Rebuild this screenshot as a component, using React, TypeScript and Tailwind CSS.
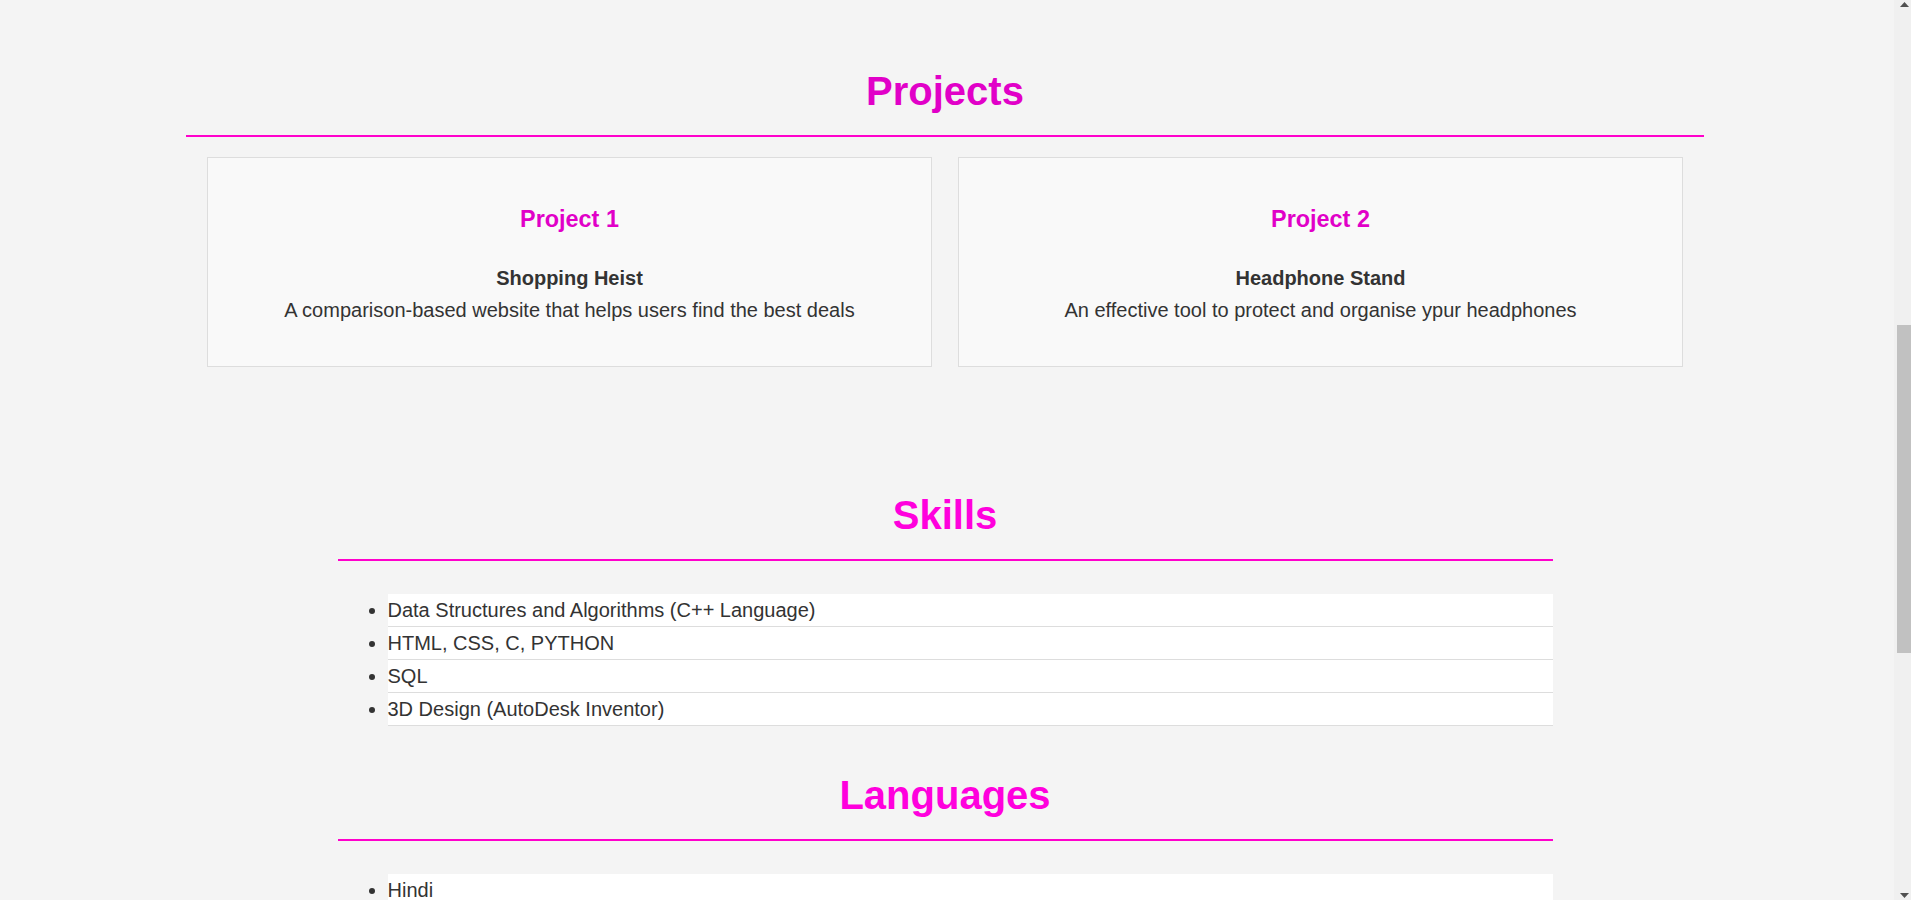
type Project = { label: string; title: string; desc: string };

const projects: Project[] = [
  {
    label: "Project 1",
    title: "Shopping Heist",
    desc: "A comparison-based website that helps users find the best deals",
  },
  {
    label: "Project 2",
    title: "Headphone Stand",
    desc: "An effective tool to protect and organise ypur headphones",
  },
];

const skills = [
  "Data Structures and Algorithms (C++ Language)",
  "HTML, CSS, C, PYTHON",
  "SQL",
  "3D Design (AutoDesk Inventor)",
];

const languages = ["Hindi", "English"];

function ListSection({ title, items, className }: { title: string; items: string[]; className: string }) {
  return (
    <section className={`w-[1215px] mx-auto ${className}`}>
      <h2 className="text-center text-[40px] leading-[64px] font-bold text-[#ff00dd] pb-3 border-b-2 border-[#ff00cc]">
        {title}
      </h2>
      <ul className="list-disc pl-[50px] mt-[33px]">
        {items.map((s) => (
          <li key={s} className="bg-white border-b border-[#dddddd] leading-[32px]">
            {s}
          </li>
        ))}
      </ul>
    </section>
  );
}

function ScrollBar() {
  return (
    <div className="w-[17px] h-screen shrink-0 bg-[#f0f0f0] flex flex-col items-center">
      <div className="h-[17px] w-full flex items-start justify-center pt-[2px] pl-[3px]">
        <svg width="9" height="5" viewBox="0 0 9 5">
          <polygon points="4.5,0 9,5 0,5" fill="#505050" />
        </svg>
      </div>
      <div className="w-full pl-[3px] mt-[308px]">
        <div className="h-[328px] w-full bg-[#c1c1c1]" />
      </div>
      <div className="flex-1" />
      <div className="h-[17px] w-full flex items-end justify-center pb-[2px] pl-[3px]">
        <svg width="9" height="5" viewBox="0 0 9 5">
          <polygon points="0,0 9,0 4.5,5" fill="#505050" />
        </svg>
      </div>
    </div>
  );
}

export default function App() {
  return (
    <div className="h-screen overflow-hidden flex bg-[#f4f4f4] text-[#333333] font-['Liberation_Sans',Arial,sans-serif] text-[20px] leading-[32px]">
      <main className="flex-1 overflow-hidden">
        <div className="w-[1890px] pt-[59px]">
          <section className="w-[1518px] mx-auto">
            <h2 className="text-center text-[40px] leading-[64px] font-bold text-[#e100c8] pb-3 border-b-2 border-[#ff00cc]">
              Projects
            </h2>
            <div className="flex gap-[26px] px-[21px] mt-5">
              {projects.map((p) => (
                <div key={p.label} className="flex-1 bg-[#f9f9f9] border border-[#dddddd] p-5 text-center">
                  <h3 className="text-[23.4px] leading-[37.44px] font-bold text-[#e100c8] my-[23.4px]">{p.label}</h3>
                  <p className="my-5">
                    <strong className="font-bold">{p.title}</strong>
                    <br />
                    {p.desc}
                  </p>
                </div>
              ))}
            </div>
          </section>
          <ListSection title="Skills" items={skills} className="mt-[116px]" />
          <ListSection title="Languages" items={languages} className="mt-[37px]" />
        </div>
      </main>
      <ScrollBar />
    </div>
  );
}
